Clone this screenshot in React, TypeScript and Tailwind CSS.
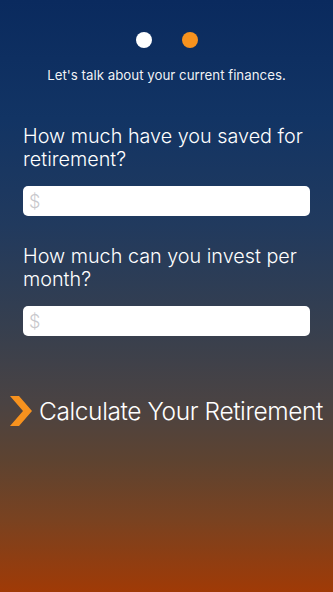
export default function App() {
  return (
    <div
      className="relative flex h-[592px] w-[333px] flex-col overflow-hidden bg-[linear-gradient(180deg,#0a2a5e_0%,#123464_20%,#213a5e_38%,#363f4f_55%,#4a4343_68%,#5e4330_78%,#7a4220_88%,#a03a06_100%)] text-white"
      style={{ fontFamily: "Inter, 'Liberation Sans', sans-serif" }}
    >
      {/* Step dots */}
      <div className="flex justify-center gap-[30px] pt-[32px]">
        <span className="h-[16px] w-[16px] rounded-full bg-white" />
        <span className="h-[16px] w-[16px] rounded-full bg-[#f7921e]" />
      </div>

      <p className="mt-[19px] text-center text-[13.3px] leading-[17px] text-white/95">
        Let&apos;s talk about your current finances.
      </p>

      <div className="mt-[41px] px-[23px]">
        <label className="block text-[19.8px] font-light leading-[23px]">
          How much have you saved for retirement?
        </label>
        <div className="mt-[15px] flex h-[30px] items-center rounded-[5px] bg-white pl-[6px] text-[18px] font-light text-[#c8c8cc]">
          $
        </div>

        <label className="mt-[29px] block text-[19.8px] font-light leading-[23px]">
          How much can you invest per month?
        </label>
        <div className="mt-[15px] flex h-[30px] items-center rounded-[5px] bg-white pl-[6px] text-[18px] font-light text-[#c8c8cc]">
          $
        </div>
      </div>

      <button className="mt-[60px] flex items-center gap-[7px] pl-[10px] text-left">
        <ChevronIcon />
        <span className="text-[24.5px] font-light leading-[30px] tracking-[-0.4px]">Calculate Your Retirement</span>
      </button>
    </div>
  );
}

function ChevronIcon() {
  return (
    <svg width="22" height="30" viewBox="0 0 22 30" aria-hidden>
      <path d="M0 0h9l13 15-13 15H0l13-15z" fill="#f7921e" />
    </svg>
  );
}
